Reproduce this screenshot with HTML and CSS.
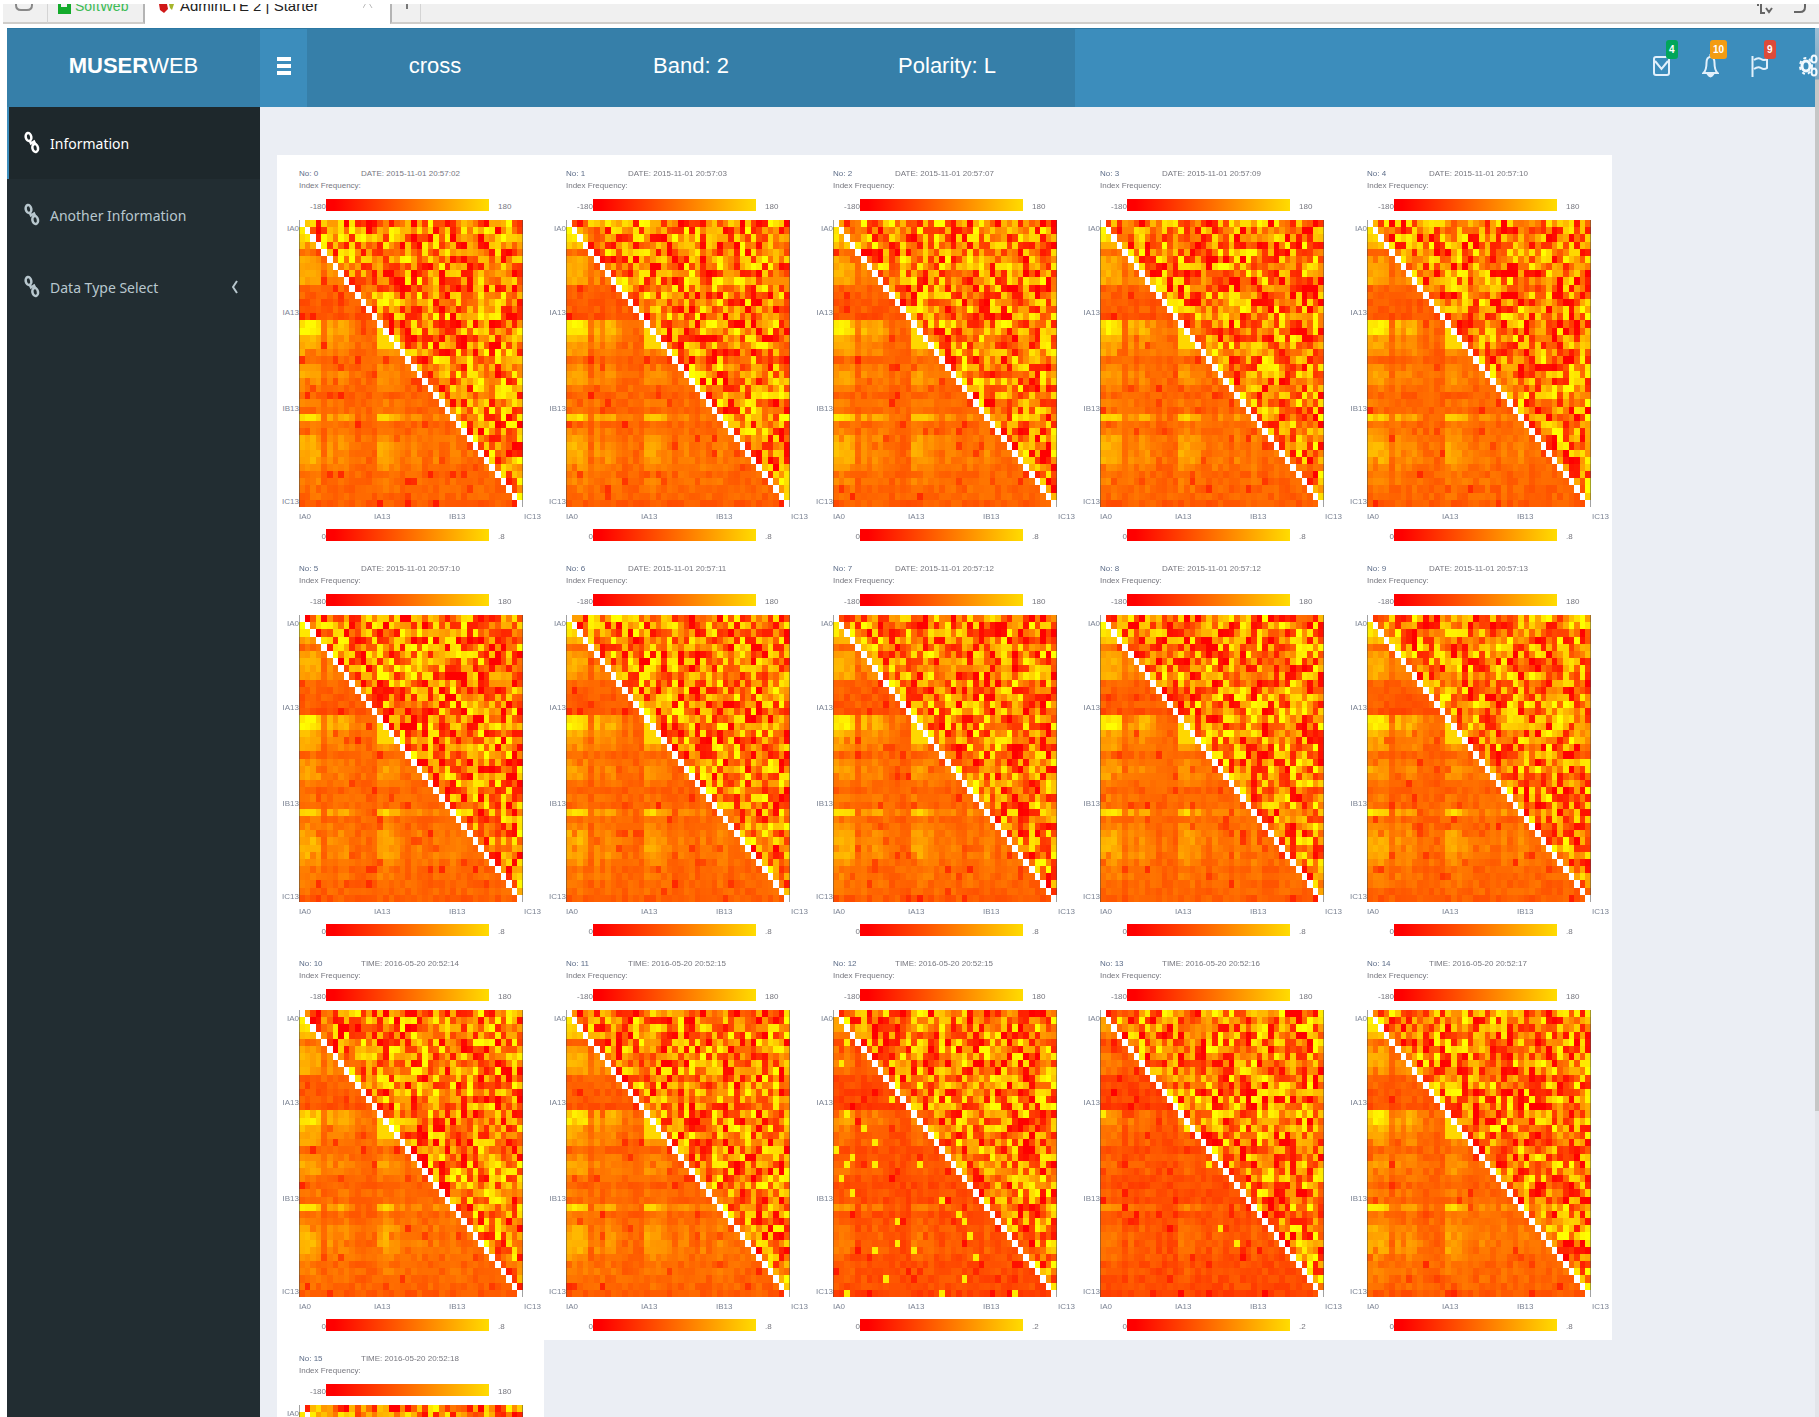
FILE: index.html
```html
<!DOCTYPE html>
<html lang="en">
<head>
<meta charset="utf-8">
<title>AdminLTE 2 | Starter</title>
<link rel="stylesheet" href="styles.css">
</head>
<body>
<div class="tabstrip">
  <div class="tab tab-home">
    <svg width="18" height="18" viewBox="0 0 18 18" fill="none" stroke="#888" stroke-width="2"><path d="M1 -4v5q0 5 5 5h6q5 0 5-5v-5"/></svg>
  </div>
  <div class="tab tab-soft">
    <svg width="13" height="10" viewBox="0 0 13 10"><path fill="#13ab2b" d="M0 0h3v3h6V0h4v10H0z"/></svg>
    <span class="tab-text">SoftWeb</span>
  </div>
  <div class="tab tab-active">
    <svg width="16" height="10" viewBox="0 0 16 10"><path fill="#d01818" d="M0 0h8l1 5-4 4-4-3z"/><path fill="#a6b52c" d="M10 0h5l-2 6-2-2z"/></svg>
    <span class="tab-text">AdminLTE 2 | Starter</span>
    <svg class="tab-close" width="10" height="10" viewBox="0 0 10 10" fill="none" stroke="#bbb"><path d="M3 -1L0 4M6 -1l3 5"/></svg>
  </div>
  <div class="tab tab-new">
    <svg width="4" height="10" viewBox="0 0 4 10"><path fill="#777" d="M1 0h2v5H1z"/></svg>
  </div>
  <div class="tab tab-rest">
    <svg width="17" height="12" viewBox="0 0 17 12" fill="none" stroke="#666" stroke-width="2"><path d="M2 0v2M5 0v9h4M10 4l3 4 3-4"/></svg>
    <svg width="14" height="12" viewBox="0 0 14 12" fill="none" stroke="#666" stroke-width="2"><path d="M12 0v3q0 5-5 5H1"/></svg>
  </div>
</div>

<div class="window">
  <div class="app">
    <header class="header">
      <a class="logo" href="#"><b>MUSER</b>WEB</a>
      <button class="toggle" type="button" aria-label="Toggle navigation">
        <svg width="14" height="18" viewBox="0 0 14 18" fill="#fff"><path d="M0 0h14v4H0zM0 7h14v4H0zM0 14h14v4H0z"/></svg>
      </button>
      <nav class="modes">
        <a href="#">cross</a>
        <a href="#">Band: 2</a>
        <a href="#">Polarity: L</a>
      </nav>
      <div class="tools">
        <button class="tool" type="button" aria-label="Messages">
          <svg width="17" height="20" viewBox="0 0 17 20" fill="none" stroke="#e2f0fb" stroke-width="2"><rect x="1" y="1" width="15" height="18" rx="2"/><path d="M2 5l6.500 8L15 5"/></svg>
          <span class="badge green">4</span>
        </button>
        <button class="tool" type="button" aria-label="Notifications">
          <svg width="17" height="24" viewBox="0 0 17 24" fill="none" stroke="#e2f0fb" stroke-width="2"><path d="M1.500 19c3-3 3-6 3-10s2-6 4-6 4 2 4 6 0 7 3 10z"/><path d="M8.500 0v3" /><path d="M6 20.500q2.500 4 5 0z" fill="#fff"/></svg>
          <span class="badge orange">10</span>
        </button>
        <button class="tool" type="button" aria-label="Tasks">
          <svg width="17" height="21" viewBox="0 0 17 21" fill="none" stroke="#e2f0fb" stroke-width="2"><path d="M1.500 0v21"/><path d="M3 4q4-3 7-1t6 0v9q-3 2-6 0t-7 1"/></svg>
          <span class="badge red">9</span>
        </button>
        <button class="tool" type="button" aria-label="Settings">
          <svg width="19" height="24" viewBox="0 0 19 24" fill="none" stroke="#f2f9fe"><ellipse cx="7" cy="12" rx="4" ry="5" stroke-width="3"/><ellipse cx="7" cy="12" rx="6" ry="8" stroke-width="2" stroke-dasharray="3 3"/><ellipse cx="15" cy="5" rx="2.500" ry="3.500" stroke-width="2"/><ellipse cx="15" cy="18" rx="2.500" ry="3.500" stroke-width="2"/></svg>
        </button>
      </div>
    </header>
    <div class="body">
      <nav class="sidebar">
        <a class="item active" href="#"><svg class="chain" viewBox="0 0 16 24"><use href="#chain"/></svg><span>Information</span></a>
        <a class="item" href="#"><svg class="chain" viewBox="0 0 16 24"><use href="#chain"/></svg><span>Another Information</span></a>
        <a class="item" href="#"><svg class="chain" viewBox="0 0 16 24"><use href="#chain"/></svg><span>Data Type Select</span>
          <svg class="chevron" width="6" height="14" viewBox="0 0 6 14" fill="none" stroke="#b8c7ce" stroke-width="2"><path d="M5 1L1 7l4 6"/></svg></a>
      </nav>
      <main class="content">
        <div class="gallery" id="gallery"></div>
      </main>
    </div>
  </div>
  <div class="scrollbar"><div class="thumb"></div></div>
</div>

<svg class="defs" width="0" height="0" aria-hidden="true">
  <g id="chain" fill="none" stroke="currentColor" stroke-width="2.500">
    <ellipse cx="4.500" cy="6" rx="2.800" ry="4" transform="rotate(-12 4.500 6)"/>
    <ellipse cx="11.200" cy="17" rx="2.800" ry="4" transform="rotate(-12 11.200 17)"/>
    <path d="M5.500 9l1.500 3.500 3-2 1.500 3"/>
  </g>
</svg>

<template id="plot">
  <figure class="plot">
    <figcaption class="caption"><span class="no"></span><span class="date"></span><span class="kind">Index Frequency:</span></figcaption>
    <div class="scale"><span class="low">-180</span><span class="ramp"></span><span class="high">180</span></div>
    <div class="chart">
      <div class="rows"><span>IA0</span><span>IA13</span><span>IB13</span><span>IC13</span></div>
      <canvas class="matrix" width="224" height="287"></canvas>
    </div>
    <div class="cols"><span>IA0</span><span>IA13</span><span>IB13</span><span>IC13</span></div>
    <div class="scale"><span class="low">0</span><span class="ramp"></span><span class="high max"></span></div>
  </figure>
</template>
<script src="plots.js"></script>
</body>
</html>
```
FILE: styles.css
```css
* { box-sizing: border-box; }

body {
  margin: 0;
  height: 100vh;
  display: flex;
  flex-direction: column;
  overflow: hidden;
  background: #fff;
  font-family: "Liberation Sans", Arial, sans-serif;
}

a { color: inherit; text-decoration: none; }
button { border: 0; padding: 0; background: none; font: inherit; color: inherit; }
.defs { position: absolute; }

/* Browser tab strip */
.tabstrip {
  display: flex;
  flex: none;
  height: 24px;
  margin: 4px 0 0 3px;
  padding-bottom: 4px;
  overflow: hidden;
}
.tab {
  display: flex;
  align-items: flex-start;
  height: 20px;
  background: #f0f0f0;
  border-bottom: 2px solid #cfcdca;
  overflow: hidden;
}
.tab-text { height: 4px; line-height: 4px; font-size: 14px; }
.tab-home { width: 45px; padding-left: 12px; border-right: 1px solid #d4d4d4; }
.tab-soft { width: 97px; padding-left: 10px; gap: 4px; color: #3cbc55; border-right: 2px solid #b4b4b4; }
.tab-active { width: 245px; padding-left: 14px; gap: 5px; background: #fff; border-bottom-color: #fff; color: #222; }
.tab-active .tab-text { font-size: 15px; }
.tab-close { margin: 0 17px 0 auto; }
.tab-new { width: 31px; padding-left: 13px; border-left: 2px solid #b4b4b4; border-right: 1px solid #d4d4d4; }
.tab-rest { flex: 1; justify-content: flex-end; gap: 20px; padding-right: 12px; }

/* Application shell */
.window { display: flex; flex: 1; min-height: 0; padding-left: 7px; }
.app { display: flex; flex: 1; flex-direction: column; min-width: 0; }
.body { display: flex; flex: 1; min-height: 0; }

.header {
  display: flex;
  flex: none;
  height: 79px;
  background: #3c8dbc;
  border-top: 1px solid #2b78a3;
  color: #fff;
  font-size: 22px;
}
.logo, .modes a { display: flex; align-items: center; justify-content: center; padding-bottom: 4px; background: #367fa9; }
.logo { width: 253px; }
.toggle { display: flex; align-items: center; justify-content: center; width: 47px; padding-bottom: 4px; }
.modes { display: flex; }
.modes a { width: 256px; }

.tools { display: flex; margin: 0 -18px 0 auto; z-index: 1; }
.tool { position: relative; display: flex; align-items: center; justify-content: center; width: 49px; padding-bottom: 4px; }
.badge {
  position: absolute;
  top: 11px;
  left: 29px;
  height: 19px;
  padding: 0 3px;
  border-radius: 3px;
  font-size: 10px;
  font-weight: 700;
  line-height: 19px;
}
.green { background: #00a65a; }
.orange { background: #f39c12; left: 24px; }
.red { background: #dd4b39; }

.sidebar { flex: none; width: 253px; background: #222d32; color: #b8c7ce; }
.item {
  display: flex;
  align-items: center;
  height: 72px;
  padding: 0 22px 0 15px;
  border-left: 2px solid transparent;
  font-family: "Noto Sans", sans-serif;
  font-size: 14px;
}
.item span { margin-left: 10px; }
.active { background: #1e282c; border-left-color: #3c8dbc; color: #fff; }
.chain { width: 16px; height: 24px; }
.chevron { margin-left: auto; }

.content { flex: 1; min-width: 0; padding: 48px 17px 0; background: #ebeef4; overflow: hidden; }
.gallery { display: grid; grid-template-columns: repeat(auto-fill, 267px); }

.scrollbar { flex: none; width: 4px; background: #e3e5ea; }
.thumb { height: 78%; background: linear-gradient(#9cbfd6 0, #7ba6c0 51px, #c6c6c6 52px); }

/* Correlation plots */
.plot { margin: 0; padding-bottom: 9px; background: #fff; color: #77777f; font-size: 8px; line-height: 12px; }
.caption { display: grid; grid-template-columns: 62px auto; height: 44px; padding: 13px 0 7px 22px; }
.kind { grid-column: 1 / 3; }
.no { color: #5c6c88; }
.scale { display: grid; grid-template: 12px / 49px 163px auto; line-height: 16px; }
.low { text-align: right; }
.high { padding-left: 9px; }
.ramp { background: linear-gradient(90deg, #f00 5%, #ff7f00 60%, #ffdc00); }
.chart { display: grid; grid-template-columns: 22px 224px; margin-top: 9px; }
.rows { display: grid; grid-template-rows: 14px 84px 96px 93px; align-items: end; justify-items: end; line-height: 10px; color: #7c8494; }
.matrix { display: block; }
.cols { display: grid; grid-template-columns: repeat(3, 75px) auto; height: 22px; padding-left: 22px; line-height: 20px; color: #7c8494; }
```
FILE: plots.js
```js
// Draws one 40 x 40 antenna correlation matrix per captured frame:
// phase above the diagonal, amplitude below it.
const SIZE = 40;

const frames = [
  "DATE: 2015-11-01 20:57:02", "DATE: 2015-11-01 20:57:03", "DATE: 2015-11-01 20:57:07",
  "DATE: 2015-11-01 20:57:09", "DATE: 2015-11-01 20:57:10", "DATE: 2015-11-01 20:57:10",
  "DATE: 2015-11-01 20:57:11", "DATE: 2015-11-01 20:57:12", "DATE: 2015-11-01 20:57:12",
  "DATE: 2015-11-01 20:57:13", "TIME: 2016-05-20 20:52:14", "TIME: 2016-05-20 20:52:15",
  "TIME: 2016-05-20 20:52:15", "TIME: 2016-05-20 20:52:16", "TIME: 2016-05-20 20:52:17",
  "TIME: 2016-05-20 20:52:18"
];
const weak = new Set([12, 13]);

// Mean green level of each row over the strong antennas (columns 0-3, 14-17).
const rowLevel = [240, 240, 225, 190, 110, 165, 172, 175, 168, 100, 98, 88, 92, 78,
  238, 240, 185, 165, 160, 105, 142, 165, 158, 125, 100, 125, 110, 225, 118, 138,
  168, 178, 178, 175, 148, 118, 132, 118, 110, 92];

function random(seed) {
  let s = seed * 7919 + 13;
  return () => {
    s = (s + 0x6d2b79f5) | 0;
    let t = Math.imul(s ^ (s >>> 15), 1 | s);
    t = (t + Math.imul(t ^ (t >>> 7), 61 | t)) ^ t;
    return ((t ^ (t >>> 14)) >>> 0) / 4294967296;
  };
}

// Share of the row's strength that reaches each column.
const columnGain = [1, 1, 1, 0.85, 0.1, 0.6, 0.35, 0.6, 0.55, 0.3, 0.1, 0.2, 0.05, 0.05,
  0.85, 0.9, 0.7, 0.55, 0.3, 0.15, 0.4, 0.35, 0.2, 0.1, 0.4, 0.15, 0.2, 0.5, 0.3, 0.1,
  0.2, 0.2, 0.1, 0.2, 0.1, 0.2, 0.1, 0.1, 0.1, 0.1];

function amplitude(r, c, index, rnd) {
  const isWeak = weak.has(index);
  const excess = Math.max(rowLevel[r] - 100, 0);
  const deficit = Math.min(rowLevel[r] - 100, 0) * 0.8;
  let g = (isWeak ? 74 : 98) + deficit + excess * columnGain[c] * (isWeak ? 0.6 : 1);
  g += (rnd() - 0.5) * 36;
  if (rnd() < 0.05) g -= 50;
  if (!isWeak && r >= 14 && r <= 17 && c >= 14) g = 215;
  if (index === 12 && rnd() < 0.02) g = 235;
  if (index === 13 && rnd() < 0.008) g = 235;
  return g;
}

function draw(canvas, index) {
  const ctx = canvas.getContext("2d");
  const rnd = random(index + 1);
  const w = canvas.width / SIZE;
  const h = canvas.height / SIZE;
  for (let r = 0; r < SIZE; r++) {
    for (let c = 0; c < SIZE; c++) {
      const g = c > r ? rnd() * 275 - 15 : amplitude(r, c, index, rnd);
      const level = Math.max(0, Math.min(255, Math.round(g)));
      ctx.fillStyle = c === r ? "#fff" : `rgb(255, ${level}, 0)`;
      const x = Math.round(c * w);
      const y = Math.round(r * h);
      ctx.fillRect(x, y, Math.round((c + 1) * w) - x, Math.round((r + 1) * h) - y);
    }
  }
  ctx.fillStyle = "rgba(70, 70, 70, 0.5)";
  ctx.fillRect(0, 0, 1, canvas.height);
  ctx.fillRect(canvas.width - 1, 0, 1, canvas.height);
}

const template = document.getElementById("plot");
frames.forEach((date, i) => {
  const plot = template.content.cloneNode(true);
  plot.querySelector(".no").textContent = `No: ${i}`;
  plot.querySelector(".date").textContent = date;
  plot.querySelector(".max").textContent = weak.has(i) ? ".2" : ".8";
  draw(plot.querySelector("canvas"), i);
  document.getElementById("gallery").append(plot);
});
```
